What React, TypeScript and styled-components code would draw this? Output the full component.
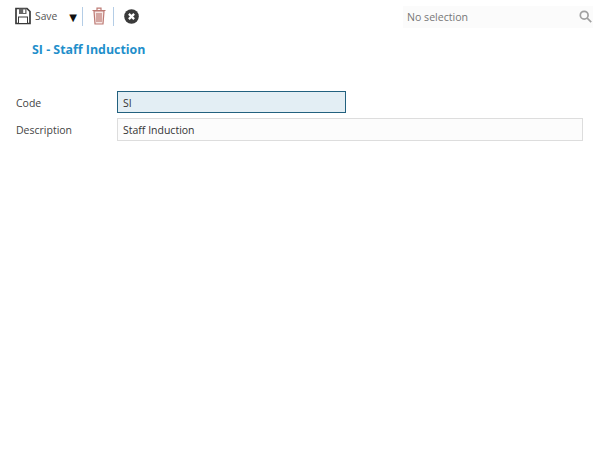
import { createGlobalStyle } from 'styled-components';
import styled from 'styled-components';

const GlobalStyle = createGlobalStyle`
	html, body {
		margin: 0;
		padding: 0;
		background: #fff;
		font-family: 'Open Sans', 'Noto Sans', sans-serif;
		font-size: 10px;
		color: #333;
	}
`;

const SaveIcon = () => (
	<svg width='16' height='18' viewBox='0 0 16 18'>
		<path d='M1 1.5h11l3 3v12H1z' fill='#fff' stroke='#3a3a3a' strokeWidth='1.7' />
		<rect x='4' y='1.5' width='7.5' height='5.5' fill='#666' />
		<rect x='8.2' y='2.5' width='2' height='3.5' fill='#fff' />
		<rect x='3.5' y='10' width='9' height='6.5' fill='#fff' stroke='#3a3a3a' />
	</svg>
);

const TrashIcon = () => (
	<svg width='14' height='18' viewBox='0 0 14 18' fill='none' stroke='#bd7a74' strokeWidth='1.2'>
		<path d='M.5 3.5h13M5 3V1.2h4V3' />
		<path d='M2 4l1 13h8l1-13z' fill='#f7e8e6' />
		<path d='M5 6v9M7 6v9M9 6v9' />
	</svg>
);

const CloseIcon = () => (
	<CloseGlyph width='15' height='15' viewBox='0 0 16 16'>
		<circle cx='8' cy='8' r='7.8' fill='#3a3a3a' />
		<path d='M5.2 5.2l5.6 5.6M10.8 5.2l-5.6 5.6' stroke='#fff' strokeWidth='2.4' />
	</CloseGlyph>
);

const SearchIcon = () => (
	<svg width='13' height='13' viewBox='0 0 13 13' fill='none' stroke='#a0a0a0' strokeWidth='1.7'>
		<circle cx='5.2' cy='5.2' r='3.9' />
		<path d='M8.2 8.2l4 4' />
	</svg>
);

const App = () => {
	return (
		<Page>
			<GlobalStyle />
			<Toolbar>
				<Actions>
					<SaveIcon />
					<SaveLabel>Save</SaveLabel>
					<Caret>▼</Caret>
					<Divider />
					<TrashIcon />
					<Divider />
					<CloseIcon />
				</Actions>
				<Lookup>
					<span>No selection</span>
					<SearchIcon />
				</Lookup>
			</Toolbar>
			<Title>SI - Staff Induction</Title>
			<Form>
				<Label>Code</Label>
				<Field $focused>SI</Field>
				<Label>Description</Label>
				<Field>Staff Induction</Field>
			</Form>
		</Page>
	);
};

export default App;

// Styled Components
const Page = styled.div`
	width: 600px;
	height: 461px;
	overflow: hidden;
	background: #fff;
`;

const Toolbar = styled.div`
	display: flex;
	justify-content: space-between;
	align-items: center;
	height: 32px;
	padding: 0 7px 0 15px;
`;

const Actions = styled.div`
	display: flex;
	align-items: center;
`;

const CloseGlyph = styled.svg`
	margin-left: 1px;
`;

const SaveLabel = styled.span`
	margin-left: 4px;
	font-size: 10.3px;
	color: #555;
`;

const Caret = styled.span`
	margin: 3px -2px 0 12px;
	font-family: 'DejaVu Sans', sans-serif;
	font-size: 10px;
	color: #111;
`;

const Divider = styled.span`
	width: 1px;
	height: 19px;
	margin: 0 9px 0 7px;
	background: #b4cde6;
`;

const Lookup = styled.div`
	box-sizing: border-box;
	display: flex;
	justify-content: space-between;
	align-items: center;
	width: 190px;
	height: 22px;
	margin-top: 1px;
	padding: 0 1px 0 4px;
	background: #fbfbfb;
	font-size: 10.6px;
	color: #777;
`;

const Title = styled.h1`
	margin: 9px 0 0 32px;
	font-size: 12.4px;
	line-height: 18px;
	font-weight: 700;
	color: #1f8fcb;
`;

const Form = styled.div`
	display: grid;
	grid-template-columns: 101px 1fr;
	row-gap: 5px;
	margin: 32px 17px 0 16px;
	align-items: center;
`;

const Label = styled.div`
	padding-top: 1px;
	font-size: 10.5px;
	color: #444;
`;

const Field = styled.div<{ $focused?: boolean }>`
	box-sizing: border-box;
	height: ${(props) => (props.$focused ? '22px' : '23px')};
	width: ${(props) => (props.$focused ? '229px' : '100%')};
	padding: 1px 5px 0;
	border: 1px solid ${(props) => (props.$focused ? '#22617f' : '#ddd')};
	background: ${(props) => (props.$focused ? '#e3eef4' : '#fcfcfc')};
	font-size: 10.5px;
	line-height: 20px;
	color: #333;
`;
